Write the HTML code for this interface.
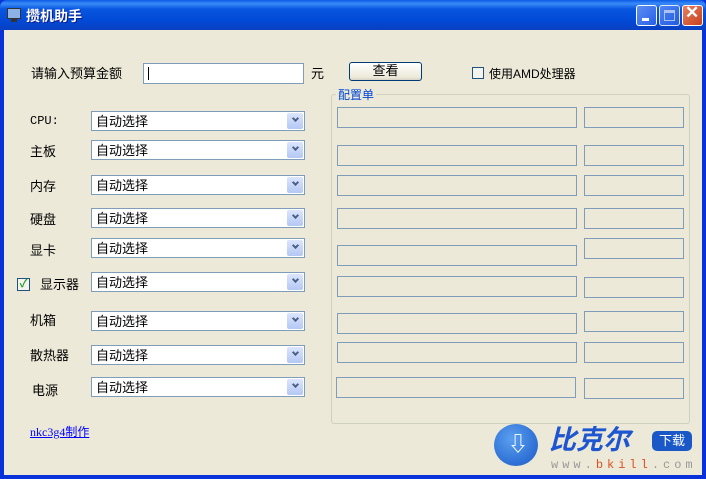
<!DOCTYPE html>
<html><head><meta charset="utf-8"><style>
*{margin:0;padding:0;box-sizing:border-box}
body{width:706px;height:479px;overflow:hidden;background:#0831d9;font-family:"Liberation Sans","Noto Sans CJK SC",sans-serif;font-size:12px;position:relative}
.a{position:absolute}
#title{left:0;top:0;width:706px;height:30px;background:linear-gradient(#0a5ae6 0%,#3a8bf8 12%,#0856e0 30%,#0249d6 70%,#0a3fc0 100%);border-radius:7px 7px 0 0}
#client{left:4px;top:30px;width:698px;height:445px;background:#ece9d8}
.lbl{color:#000;font-size:13px}
.cb{width:214px;height:20px;background:#fff;border:1px solid #7f9db9;font-size:13px;padding:1px 0 0 4px;line-height:17px}
.cb:after{content:"";position:absolute;right:1px;top:1px;width:16px;height:16px;background:linear-gradient(#dbe6fd,#b4c8f4);border-radius:2px}
.cb i{position:absolute;right:6px;top:4px;width:5px;height:5px;border-right:2px solid #4d6185;border-bottom:2px solid #4d6185;transform:rotate(45deg);z-index:2}
.tb{border:1px solid #7f9db9;height:21px;background:#ece9d8}
.tbl{left:337px;width:240px}.tbr{left:584px;width:100px}
.btn{border-radius:3px;border:1px solid #003c74;background:linear-gradient(#fff,#ece9d8 85%,#d6d0c5)}
.wb{top:5px;width:21px;height:21px;border:1px solid #fff;border-radius:3px;background:linear-gradient(135deg,#5d8df5,#2760e6)}
</style></head><body>
<div id="title" class="a"></div>
<div class="a" style="left:7px;top:8px;width:14px;height:11px;background:#8db3e6;border:1px solid #333"></div>
<div class="a" style="left:11px;top:19px;width:6px;height:3px;background:#333"></div>
<div class="a" style="left:26px;top:6px;color:#fff;font-weight:bold;font-size:14px;text-shadow:1px 1px #0a1e8a">攒机助手</div>
<div class="a wb" style="left:636px"><div class="a" style="left:5px;top:12px;width:7px;height:3px;background:#fff"></div></div>
<div class="a wb" style="left:659px;opacity:.85"><div class="a" style="left:4px;top:4px;width:11px;height:11px;border:1px solid #c8d6f8;border-top-width:3px"></div></div>
<div class="a wb" style="left:682px;background:linear-gradient(135deg,#e88060,#c8401c)"><div class="a" style="left:2px;top:-3px;color:#fff;font-size:17px;font-weight:bold">✕</div></div>
<div id="client" class="a"></div>

<div class="a lbl" style="left:31px;top:63px">请输入预算金额</div>
<div class="a" style="left:143px;top:63px;width:161px;height:21px;background:#fff;border:1px solid #7f9db9"><div class="a" style="left:4px;top:3px;width:1px;height:13px;background:#000"></div></div>
<div class="a lbl" style="left:311px;top:63px">元</div>
<div class="a btn" style="left:349px;top:62px;width:73px;height:19px;text-align:center;font-size:13px;line-height:16px">查看</div>
<div class="a" style="left:472px;top:67px;width:12px;height:12px;border:1px solid #1c5180;background:#f4f3ee"></div>
<div class="a lbl" style="left:489px;top:65px;font-size:12px">使用AMD处理器</div>

<div class="a" style="left:331px;top:94px;width:359px;height:330px;border:1px solid #d0d0bf;border-radius:3px"></div>
<div class="a" style="left:336px;top:86px;background:#ece9d8;color:#0046d5;padding:0 2px">配置单</div>

<div class="a lbl" style="left:30px;top:114px;font-family:'Liberation Mono',monospace;font-size:12px">CPU:</div>
<div class="a lbl" style="left:30px;top:141px">主板</div>
<div class="a lbl" style="left:30px;top:176px">内存</div>
<div class="a lbl" style="left:30px;top:209px">硬盘</div>
<div class="a lbl" style="left:30px;top:240px">显卡</div>
<div class="a" style="left:17px;top:278px;width:13px;height:13px;border:1px solid #1c5180;background:#f4f3ee;color:#21a121;font-size:11px;line-height:11px;text-align:center;font-weight:bold">✓</div>
<div class="a lbl" style="left:40px;top:274px">显示器</div>
<div class="a lbl" style="left:30px;top:310px">机箱</div>
<div class="a lbl" style="left:30px;top:345px">散热器</div>
<div class="a lbl" style="left:32px;top:380px">电源</div>

<div class="a cb" style="left:91px;top:111px">自动选择<i></i></div>
<div class="a cb" style="left:91px;top:140px">自动选择<i></i></div>
<div class="a cb" style="left:91px;top:175px">自动选择<i></i></div>
<div class="a cb" style="left:91px;top:208px">自动选择<i></i></div>
<div class="a cb" style="left:91px;top:238px">自动选择<i></i></div>
<div class="a cb" style="left:91px;top:272px">自动选择<i></i></div>
<div class="a cb" style="left:91px;top:311px">自动选择<i></i></div>
<div class="a cb" style="left:91px;top:345px">自动选择<i></i></div>
<div class="a cb" style="left:91px;top:377px">自动选择<i></i></div>

<div class="a tb tbl" style="top:107px"></div><div class="a tb tbr" style="top:107px"></div>
<div class="a tb tbl" style="top:145px"></div><div class="a tb tbr" style="top:145px"></div>
<div class="a tb tbl" style="top:175px"></div><div class="a tb tbr" style="top:175px"></div>
<div class="a tb tbl" style="top:208px"></div><div class="a tb tbr" style="top:208px"></div>
<div class="a tb tbl" style="top:245px"></div><div class="a tb tbr" style="top:238px"></div>
<div class="a tb tbl" style="top:276px"></div><div class="a tb tbr" style="top:277px"></div>
<div class="a tb tbl" style="top:313px"></div><div class="a tb tbr" style="top:311px"></div>
<div class="a tb tbl" style="top:342px"></div><div class="a tb tbr" style="top:342px"></div>
<div class="a tb tbl" style="top:377px;left:336px"></div><div class="a tb tbr" style="top:378px"></div>

<div class="a" style="left:30px;top:423px;color:#0000ff;text-decoration:underline;font-family:'Liberation Serif','Noto Sans CJK SC',serif;font-size:12px">nkc3g4制作</div>

<div class="a" style="left:494px;top:424px;width:44px;height:42px;border-radius:50%;background:radial-gradient(circle at 40% 35%,#5aa0f0,#1a58c8)"></div>
<div class="a" style="left:508px;top:428px;color:#fff;font-size:20px;font-weight:bold">⇩</div>
<div class="a" style="left:549px;top:424px;color:#1d56d0;font-size:27px;font-weight:bold;font-style:italic;line-height:32px">比克尔</div>
<div class="a" style="left:652px;top:431px;width:40px;height:20px;background:#1a58c8;border-radius:5px;color:#fff;font-size:13px;text-align:center;line-height:20px">下载</div>
<div class="a" style="left:551px;top:458px;color:#999;font-size:12px;letter-spacing:4px;font-family:'Liberation Mono',monospace;line-height:14px">www.<span style="color:#e05020">bkill</span>.com</div>
</body></html>
